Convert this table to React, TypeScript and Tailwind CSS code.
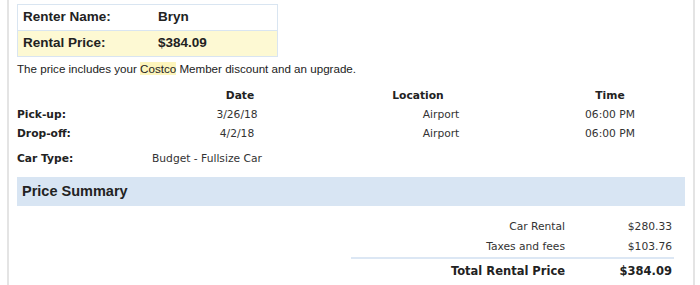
import React from "react";

const verdana = { fontFamily: '"DejaVu Sans", Verdana, sans-serif' };

export default function App() {
  return (
    <div className="w-[700px] h-[285px] overflow-hidden bg-white pl-[7px] font-['Liberation_Sans',Arial,sans-serif] text-[#222]">
      <div className="w-[688px] h-[285px] border-l-2 border-r-2 border-[#e4e4e4] px-[8px] pt-[4px]">
        {/* Renter table */}
        <div className="w-[261px] border border-[#d9e5f1] text-[13.5px] font-bold">
          <div className="grid grid-cols-[135px_1fr] h-[26px] items-center pl-[5px] border-b border-[#d9e5f1] bg-white">
            <span>Renter Name:</span>
            <span>Bryn</span>
          </div>
          <div className="grid grid-cols-[135px_1fr] h-[25px] items-center pl-[5px] bg-[#fdf9d3]">
            <span>Rental Price:</span>
            <span>$384.09</span>
          </div>
        </div>

        <p className="mt-[5px] text-[11.6px] leading-[14px] text-[#222]">
          The price includes your <span className="bg-[#fdf5bd]">Costco</span> Member discount and an upgrade.
        </p>

        {/* Details */}
        <div className="mt-[10px] text-[10.7px] text-[#333]" style={verdana}>
          <div className="grid grid-cols-[140px_160px_202px_166px] h-[20px] items-center font-bold text-[#222]">
            <span></span>
            <span className="text-center pl-[6px]">Date</span>
            <span className="text-center">Location</span>
            <span className="text-center pl-[16px]">Time</span>
          </div>
          <div className="grid grid-cols-[140px_160px_202px_166px] h-[19px] items-center">
            <span className="font-bold text-[#222]">Pick-up:</span>
            <span className="text-center">3/26/18</span>
            <span className="text-center pl-[46px]">Airport</span>
            <span className="text-center pl-[16px]">06:00 PM</span>
          </div>
          <div className="grid grid-cols-[140px_160px_202px_166px] h-[19px] items-center">
            <span className="font-bold text-[#222]">Drop-off:</span>
            <span className="text-center">4/2/18</span>
            <span className="text-center pl-[46px]">Airport</span>
            <span className="text-center pl-[16px]">06:00 PM</span>
          </div>
          <div className="grid grid-cols-[135px_1fr] h-[20px] items-center mt-[5px]">
            <span className="font-bold text-[#222]">Car Type:</span>
            <span>Budget - Fullsize Car</span>
          </div>
        </div>

        {/* Price Summary bar */}
        <div className="mt-[8px] h-[29px] bg-[#d8e5f3] flex items-center pl-[5px] text-[14.5px] font-bold text-[#222]">
          Price Summary
        </div>

        {/* Summary rows */}
        <div className="mt-[11px] flex justify-end pr-[11px] text-[10.7px] text-[#333]" style={verdana}>
          <div className="w-[323px]">
            <div className="grid grid-cols-[214px_1fr] h-[20px] items-center">
              <span className="text-right">Car Rental</span>
              <span className="text-right pr-[2px]">$280.33</span>
            </div>
            <div className="grid grid-cols-[214px_1fr] h-[20px] items-center">
              <span className="text-right">Taxes and fees</span>
              <span className="text-right pr-[2px]">$103.76</span>
            </div>
            <div className="grid grid-cols-[214px_1fr] h-[27px] items-center border-t-2 border-[#dce7f4] font-bold text-[#222] text-[11.5px]">
              <span className="text-right">Total Rental Price</span>
              <span className="text-right pr-[2px]">$384.09</span>
            </div>
          </div>
        </div>
      </div>
    </div>
  );
}
